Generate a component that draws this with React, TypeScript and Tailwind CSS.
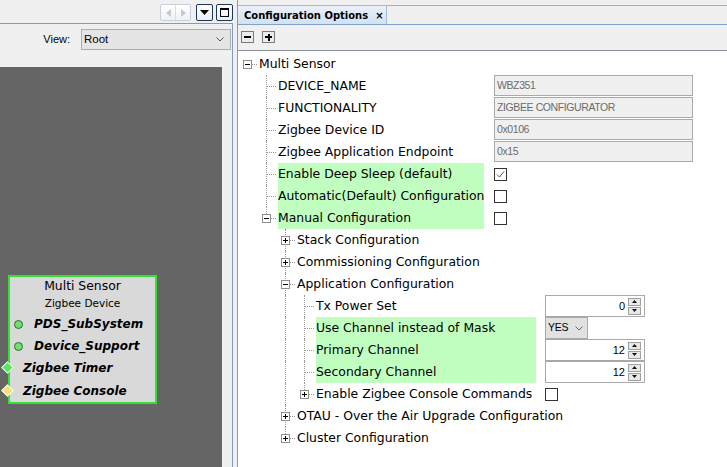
import React from 'react';

type Row = {
  label: string;
  level: number;
  guides?: boolean[];
  last?: boolean;
  toggle?: 'open' | 'closed';
  green?: boolean;
  wide?: boolean;
  value?: React.ReactNode;
};

const Field = ({ text }: { text: string }) => (
  <div className="self-start w-[199px] h-[21px] border border-[#a9a9a9] bg-[#f0f0f0] pl-[2px] flex items-center text-[#6b6b6b] text-[10.5px] tracking-[-0.4px] font-['Liberation_Sans',sans-serif]">
    {text}
  </div>
);

const Check = ({ checked }: { checked?: boolean }) => (
  <div className="w-[13px] h-[13px] border border-[#333333] bg-white flex items-center justify-center">
    {checked && (
      <svg width="9" height="9" viewBox="0 0 9 9">
        <path d="M1 4.5 L3.5 7 L8 1.5" fill="none" stroke="#555555" strokeWidth="1" />
      </svg>
    )}
  </div>
);

const SpinBtn = ({ up }: { up?: boolean }) => (
  <div className="w-[13px] h-[8px] border border-[#a0a0a0] bg-[#e8e8e8] flex items-center justify-center">
    <svg width="5" height="3" viewBox="0 0 5 3">
      <path d={up ? 'M0 3 L2.5 0 L5 3 Z' : 'M0 0 L2.5 3 L5 0 Z'} fill="#111111" />
    </svg>
  </div>
);

const Spinner = ({ v }: { v: string }) => (
  <div className="w-[100px] h-[22px] border border-[#a9a9a9] bg-white flex items-center justify-end pr-[3px] font-['Liberation_Sans',sans-serif] text-[11px]">
    <span className="mr-[3px]">{v}</span>
    <div className="flex flex-col gap-px">
      <SpinBtn up />
      <SpinBtn />
    </div>
  </div>
);

const Combo = () => (
  <div className="w-[43px] h-[22px] border border-[#a9a9a9] bg-[#e1e1e1] flex items-center pl-[2px] gap-[7px] font-['Liberation_Sans',sans-serif] text-[10.5px] tracking-[-0.3px]">
    <span>YES</span>
    <svg width="8" height="5" viewBox="0 0 8 5">
      <path d="M0.5 0.5 L4 4 L7.5 0.5" fill="none" stroke="#666666" strokeWidth="1" />
    </svg>
  </div>
);

const L1 = [false];
const L2 = [false, false];
const L3 = [false, false, true];

const ROWS: Row[] = [
  { label: 'Multi Sensor', level: 0, last: true, toggle: 'open' },
  { label: 'DEVICE_NAME', level: 1, guides: L1, value: <Field text="WBZ351" /> },
  { label: 'FUNCTIONALITY', level: 1, guides: L1, value: <Field text="ZIGBEE CONFIGURATOR" /> },
  { label: 'Zigbee Device ID', level: 1, guides: L1, value: <Field text="0x0106" /> },
  { label: 'Zigbee Application Endpoint', level: 1, guides: L1, value: <Field text="0x15" /> },
  { label: 'Enable Deep Sleep (default)', level: 1, guides: L1, green: true, value: <Check checked /> },
  { label: 'Automatic(Default) Configuration', level: 1, guides: L1, green: true, value: <Check /> },
  { label: 'Manual Configuration', level: 1, guides: L1, green: true, last: true, toggle: 'open', value: <Check /> },
  { label: 'Stack Configuration', level: 2, guides: L2, toggle: 'closed' },
  { label: 'Commissioning Configuration', level: 2, guides: L2, toggle: 'closed' },
  { label: 'Application Configuration', level: 2, guides: L2, toggle: 'open' },
  { label: 'Tx Power Set', level: 3, guides: L3, wide: true, value: <Spinner v="0" /> },
  { label: 'Use Channel instead of Mask', level: 3, guides: L3, wide: true, green: true, value: <Combo /> },
  { label: 'Primary Channel', level: 3, guides: L3, wide: true, green: true, value: <Spinner v="12" /> },
  { label: 'Secondary Channel', level: 3, guides: L3, wide: true, green: true, value: <Spinner v="12" /> },
  { label: 'Enable Zigbee Console Commands', level: 3, guides: L3, wide: true, last: true, toggle: 'closed', value: <Check /> },
  { label: 'OTAU - Over the Air Upgrade Configuration', level: 2, guides: L2, toggle: 'closed' },
  { label: 'Cluster Configuration', level: 2, guides: L2, last: true, toggle: 'closed' },
];

const Expander = ({ open }: { open: boolean }) => (
  <div className="absolute left-[5px] top-[7px] w-[9px] h-[9px] border border-[#8f8f8f] bg-white">
    <div className="absolute left-[1px] top-[3px] w-[5px] h-px bg-black" />
    {!open && <div className="absolute left-[3px] top-[1px] w-px h-[5px] bg-black" />}
  </div>
);

const TreeRow = ({ row }: { row: Row }) => {
  const root = row.level === 0;
  return (
    <div className="h-[22px] flex items-center">
      {(row.guides ?? []).map((on, i) => (
        <div key={i} className="relative w-[19px] h-full shrink-0">
          {on && <div className="absolute left-[9px] top-0 h-full border-l border-dotted border-[#9a9a9a]" />}
        </div>
      ))}
      <div className="relative w-[19px] h-full shrink-0">
        {!root && (
          <div
            className={
              row.last
                ? 'absolute left-[9px] top-0 h-[11px] border-l border-dotted border-[#9a9a9a]'
                : 'absolute left-[9px] top-0 h-full border-l border-dotted border-[#9a9a9a]'
            }
          />
        )}
        <div className="absolute left-[10px] top-[11px] w-[9px] border-t border-dotted border-[#9a9a9a]" />
        {row.toggle && <Expander open={row.toggle === 'open'} />}
      </div>
      <div
        className={[
          'h-full ml-[2px] pt-px flex items-center whitespace-nowrap shrink-0',
          row.green ? 'bg-[#c0ffc0]' : '',
          row.value ? (row.wide ? 'w-[220px]' : 'w-[206px]') : '',
        ].join(' ')}
      >
        {row.label}
      </div>
      {row.value && (
        <div className={row.wide ? 'ml-[9px] h-full flex items-center' : 'ml-[10px] h-full flex items-center'}>
          {row.value}
        </div>
      )}
    </div>
  );
};

const TopButtons = () => (
  <div className="h-[23px] flex items-start justify-end pt-[4px]">
    <div className="w-[31px] h-[17px] rounded-[2px] border border-[#c3d0e0] bg-gradient-to-b from-white to-[#eef2f7] flex items-center">
      <div className="w-[15px] h-full flex items-center justify-center border-r border-[#d5dde8]">
        <svg width="5" height="8" viewBox="0 0 5 8">
          <path d="M5 0 L0 4 L5 8 Z" fill="#c8c8c8" />
        </svg>
      </div>
      <div className="flex-1 h-full flex items-center justify-center">
        <svg width="5" height="8" viewBox="0 0 5 8">
          <path d="M0 0 L5 4 L0 8 Z" fill="#c8c8c8" />
        </svg>
      </div>
    </div>
    <div className="ml-[5px] w-[17px] h-[17px] rounded-[2px] border border-[#1d3557] bg-gradient-to-b from-white to-[#e9eef5] flex items-center justify-center">
      <svg width="9" height="5" viewBox="0 0 9 5">
        <path d="M0 0 L9 0 L4.5 5 Z" fill="#000000" />
      </svg>
    </div>
    <div className="ml-[3px] w-[17px] h-[17px] rounded-[2px] border border-[#1d3557] bg-gradient-to-b from-white to-[#e9eef5] flex items-center justify-center">
      <div className="w-[9px] h-[9px] border border-black border-t-2" />
    </div>
  </div>
);

const NodeItem = ({ label, kind, tall }: { label: string; kind: 'dot' | 'green' | 'yellow'; tall?: boolean }) => (
  <div className={tall ? 'relative h-[24px] flex items-center' : 'relative h-[22px] flex items-center'}>
    {kind === 'dot' ? (
      <>
        <div className="ml-[4px] w-[9px] h-[9px] rounded-full bg-[#70e070] border border-[#2f6d2f]" />
        <span className="ml-[11px]">{label}</span>
      </>
    ) : (
      <>
        <div
          className={
            kind === 'green'
              ? 'absolute left-[-7px] top-[6px] w-[9px] h-[9px] rotate-45 bg-[#62e062] border border-[#e6ffe6]'
              : 'absolute left-[-7px] top-[7px] w-[9px] h-[9px] rotate-45 bg-[#f3e27c] border border-[#fffbe0]'
          }
        />
        <span className="ml-[13px]">{label}</span>
      </>
    )}
  </div>
);

export default function App() {
  return (
    <div className="w-[727px] h-[467px] bg-[#f0f0f0] flex overflow-hidden font-['DejaVu_Sans',sans-serif] text-[12.4px] text-black">
      {/* left: diagram */}
      <div className="w-[233px] h-full flex flex-col shrink-0">
        <TopButtons />
        <div className="flex-1 flex flex-col border-t border-r border-[#7f9dbf]">
          <div className="h-[43px] pt-[5px] flex items-start">
            <span className="w-[70px] h-[21px] flex items-center justify-end font-['Liberation_Sans',sans-serif] text-[11px]">
              View:
            </span>
            <div className="ml-[11px] w-[150px] h-[21px] border border-[#adadad] bg-[#e5e5e5] flex items-center justify-between pl-[2px] pr-[6px] font-['Liberation_Sans',sans-serif] text-[11.5px]">
              <span>Root</span>
              <svg width="8" height="5" viewBox="0 0 8 5">
                <path d="M0.5 0.5 L4 4 L7.5 0.5" fill="none" stroke="#555555" strokeWidth="1" />
              </svg>
            </div>
          </div>
          <div className="flex-1 flex">
            <div className="relative w-[222px] h-full bg-[#656565]">
              <div className="absolute left-[8px] top-[208px] w-[149px] h-[129px] bg-[#d9d9d9] border-2 border-[#35e035]">
                <div className="h-[19px] flex items-center justify-center">Multi Sensor</div>
                <div className="h-[16px] flex items-center justify-center text-[10.5px]">Zigbee Device</div>
                <div className="font-bold italic text-[12px] pt-px">
                  <NodeItem label="PDS_SubSystem" kind="dot" />
                  <NodeItem label="Device_Support" kind="dot" />
                  <NodeItem label="Zigbee Timer" kind="green" />
                  <NodeItem label="Zigbee Console" kind="yellow" tall />
                </div>
              </div>
            </div>
            <div className="flex-1" />
          </div>
        </div>
      </div>

      {/* splitter */}
      <div className="w-[4px] shrink-0" />

      {/* right: configuration options */}
      <div className="flex-1 h-full flex flex-col border-l border-[#7f9dbf]">
        <div className="h-[25px] flex items-end border-b border-[#7da2cc]">
          <div className="w-[149px] h-[19px] border-t border-r border-[#a9bbd2] bg-gradient-to-b from-[#eaf1fa] to-[#d3e1f3] flex items-center pl-[6px]">
            <span className="font-bold text-[10px]">Configuration Options</span>
            <span className="ml-[7px] font-bold text-[10px]">×</span>
          </div>
          <div className="flex-1 h-[19px] border-t border-[#a7afb8]" />
        </div>
        <div className="h-[26px] flex items-start pt-[6px] pl-[3px] gap-[8px] border-b border-[#8a9099]">
          <div className="w-[13px] h-[12px] border border-[#7a7a7a] bg-[#ececec] flex items-center justify-center">
            <div className="w-[7px] h-[2px] bg-black" />
          </div>
          <div className="relative w-[13px] h-[12px] border border-[#7a7a7a] bg-[#ececec] flex items-center justify-center">
            <div className="w-[7px] h-[2px] bg-black" />
            <div className="absolute left-[4.5px] top-[1.5px] w-[2px] h-[7px] bg-black" />
          </div>
        </div>
        <div className="flex-1 bg-white pt-[2px]">
          {ROWS.map((r) => (
            <TreeRow key={r.label} row={r} />
          ))}
        </div>
      </div>
    </div>
  );
}
